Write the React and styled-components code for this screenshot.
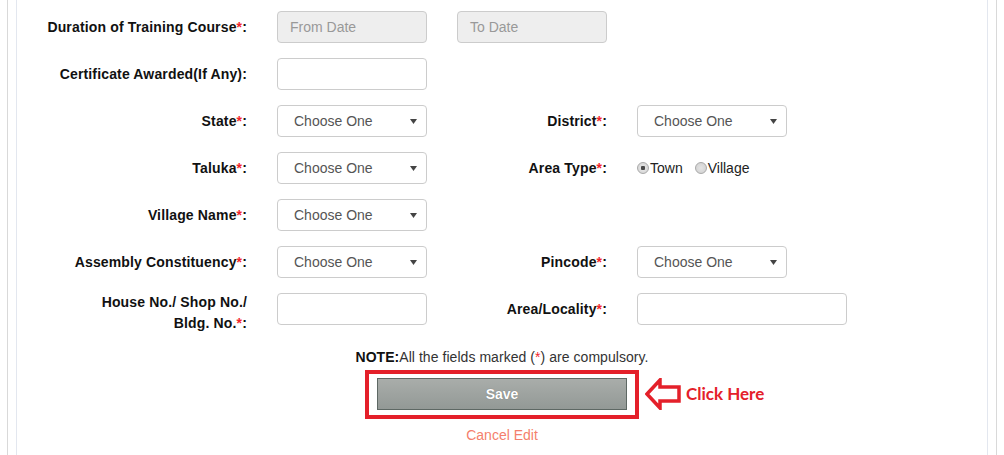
import React from 'react';
import styled, { createGlobalStyle } from 'styled-components';

const red = "#e4202a"

const GlobalStyle = createGlobalStyle`
  body {
    margin: 0;
    background: #fff;
    font-family: "Liberation Sans", Arial, sans-serif;
    font-size: 14px;
    color: #333;
  }
`
const Frame = styled.div`
  margin: 0 7px;
  min-height: 455px;
  border-left: 1px solid #d9d9d9;
  border-right: 1px solid #d9d9d9;
  box-sizing: border-box;
  display: flex;
`
const Panel = styled.div`
  flex: 1;
  margin: 0 8px;
  padding-top: 11px;
  border-left: 1px solid #e3e7ef;
  border-right: 1px solid #e3e7ef;
`
const FormGrid = styled.div`
  display: grid;
  grid-template-columns: 230px 150px 150px 210px;
  grid-auto-rows: 32px;
  column-gap: 30px;
  row-gap: 15px;
`
const Label = styled.div`
  display: flex;
  align-items: center;
  justify-content: flex-end;
  font-weight: bold;
  letter-spacing: 0.15px;
  color: #111;
  white-space: nowrap;
`
const TallLabel = styled.div`
  align-self: start;
  height: 32px;
  margin-top: -1px;
  line-height: 21px;
  text-align: right;
  font-weight: bold;
  letter-spacing: 0.15px;
  color: #111;
`
const Star = styled.span`
  color: #f2262d;
`
const Input = styled.div`
  box-sizing: border-box;
  width: ${p => p.$width || 150}px;
  height: 32px;
  padding: 0 12px;
  display: flex;
  align-items: center;
  border: 1px solid #ccc;
  border-radius: 4px;
  background: ${p => (p.$disabled ? '#eee' : '#fff')};
  color: #999;
`
const SelectBox = styled.div`
  box-sizing: border-box;
  width: 150px;
  height: 32px;
  padding: 0 9px 0 16px;
  display: flex;
  align-items: center;
  justify-content: space-between;
  border: 1px solid #ccc;
  border-radius: 4px;
  background: #fff;
  color: #555;
`
const RadioGroup = styled.div`
  display: flex;
  align-items: center;
  gap: 12px;
  color: #222;
`
const RadioItem = styled.label`
  display: flex;
  align-items: center;
`
const RadioDot = styled.span`
  box-sizing: border-box;
  width: 12px;
  height: 12px;
  margin-right: 1px;
  border-radius: 50%;
  border: 1px solid #a9a9a9;
  background: radial-gradient(circle, ${p => (p.$checked ? '#4a4a4a 0 2px, #e2e2e2 2.5px' : '#e4e4e4 0')}, #cfcfcf 100%);
`
const Footer = styled.div`
  display: flex;
  flex-direction: column;
  align-items: center;
  margin-top: 22px;
  line-height: 20px;
`
const Note = styled.div`
  color: #333;
  letter-spacing: 0.05px;
  b {
    color: #111;
  }
`
const Marker = styled.div`
  position: relative;
  margin-top: 3px;
  padding: 4px 8px 5px;
  border: 4px solid ${red};
`
const SaveButton = styled.button`
  display: block;
  width: 250px;
  height: 32px;
  border: 1px solid #5e6864;
  background: linear-gradient(#a9adaa, #939996);
  color: #fff;
  font-family: "Liberation Sans", Arial, sans-serif;
  font-size: 14px;
  font-weight: bold;
  text-shadow: 0 0 1px rgba(0, 0, 0, .35);
  cursor: pointer;
`
const Callout = styled.div`
  position: absolute;
  left: calc(100% + 10px);
  top: 4px;
  display: flex;
  align-items: center;
  gap: 5px;
  color: ${red};
  font-family: Lato, "Open Sans", sans-serif;
  font-size: 17px;
  font-weight: 700;
  white-space: nowrap;
`
const CancelLink = styled.a`
  margin-top: 6px;
  color: #f47f6c;
  text-decoration: none;
`

function Req({ children, required }) {
  return <Label>{children}{required && <Star>*</Star>}:</Label>
}

function Select() {
  return <SelectBox>
    Choose One
    <svg width="7" height="5" viewBox="0 0 7 5"><path d="M0 0h7L3.5 5z" fill="#444" /></svg>
  </SelectBox>
}

function Radio({ checked, children }) {
  return <RadioItem><RadioDot $checked={checked} />{children}</RadioItem>
}

export default function App() {
  return <Frame>
    <GlobalStyle />
    <Panel>
      <FormGrid>
        <Req required>Duration of Training Course</Req>
        <Input $disabled>From Date</Input>
        <Input $disabled>To Date</Input>
        <span />

        <Req>Certificate Awarded(If Any)</Req>
        <Input />
        <span />
        <span />

        <Req required>State</Req>
        <Select />
        <Req required>District</Req>
        <Select />

        <Req required>Taluka</Req>
        <Select />
        <Req required>Area Type</Req>
        <RadioGroup>
          <Radio checked>Town</Radio>
          <Radio>Village</Radio>
        </RadioGroup>

        <Req required>Village Name</Req>
        <Select />
        <span />
        <span />

        <Req required>Assembly Constituency</Req>
        <Select />
        <Req required>Pincode</Req>
        <Select />

        <TallLabel>House No./ Shop No./<br />Bldg. No.<Star>*</Star>:</TallLabel>
        <Input />
        <Req required>Area/Locality</Req>
        <Input $width={210} />
      </FormGrid>

      <Footer>
        <Note><b>NOTE:</b>All the fields marked (<Star>*</Star>) are compulsory.</Note>
        <Marker>
          <SaveButton>Save</SaveButton>
          <Callout>
            <svg width="36" height="32" viewBox="0 0 36 32">
              <path d="M2 16L15 2V9H34V23H15V30Z" fill="none" stroke={red} strokeWidth="3.5" strokeLinejoin="miter" />
            </svg>
            Click Here
          </Callout>
        </Marker>
        <CancelLink href="#">Cancel Edit</CancelLink>
      </Footer>
    </Panel>
  </Frame>
}
